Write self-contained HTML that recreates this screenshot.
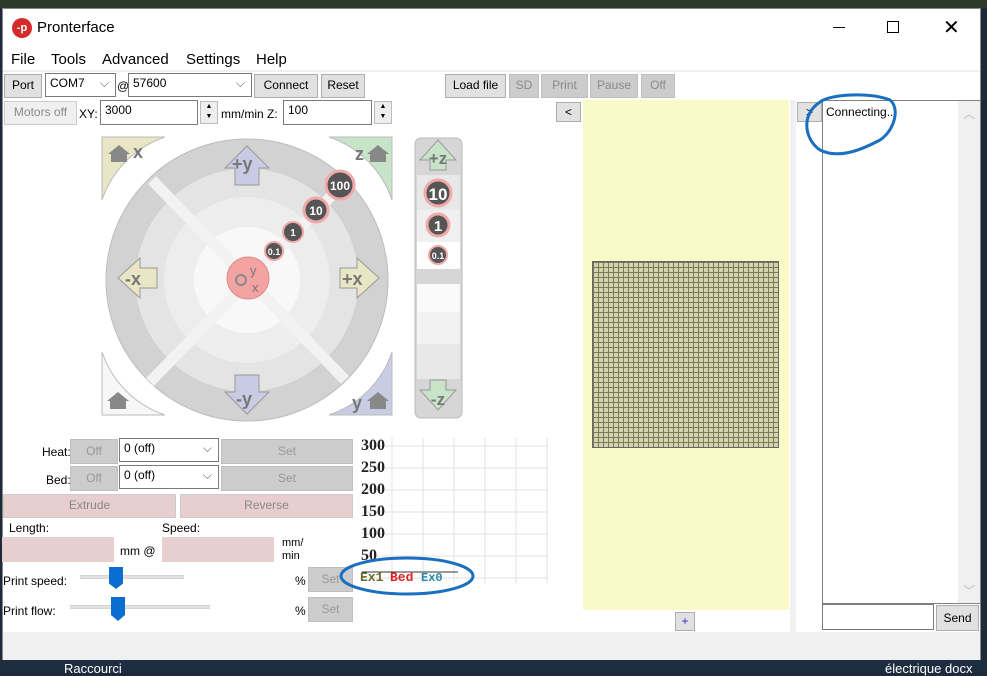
<!DOCTYPE html>
<html><head><meta charset="utf-8"><style>
*{box-sizing:border-box;margin:0;padding:0}
body{width:987px;height:672px;overflow:hidden;background:#1d2a3a;font-family:"Liberation Sans",sans-serif;font-size:12px;color:#000;position:relative}
.a{position:absolute}
.btn{position:absolute;background:#e1e1e1;border:1px solid #adadad;text-align:center;font-size:12px;line-height:21px;color:#000}
.dis{background:#ccc;border-color:#bfbfbf;color:#8a8a8a}
.inp{position:absolute;background:#fff;border:1px solid #7a7a7a;font-size:12px;padding:2px 4px}
.lbl{position:absolute;font-size:12px}
</style></head><body>
<div class="a" style="left:0;top:0;width:987px;height:8px;background:#2d3a2a"></div>
<div class="a" style="left:2px;top:8px;width:979px;height:652px;background:#fff;border:1px solid #888"></div>
<!-- title -->
<div class="a" style="left:12px;top:18px;width:20px;height:20px;border-radius:50%;background:#d42a2a;color:#fff;font-size:11px;font-weight:bold;line-height:20px;text-align:center">-p</div>
<div class="lbl" style="left:37px;top:19px;font-size:15px">Pronterface</div>
<div class="a" style="left:833px;top:27px;width:12px;height:1px;background:#000"></div>
<div class="a" style="left:887px;top:21px;width:12px;height:12px;border:1px solid #000"></div>
<div class="lbl" style="left:943px;top:15px;font-size:20px;font-weight:200">✕</div>
<!-- menu -->
<div class="lbl" style="left:11px;top:51px;font-size:15px">File</div>
<div class="lbl" style="left:51px;top:51px;font-size:15px">Tools</div>
<div class="lbl" style="left:102px;top:51px;font-size:15px">Advanced</div>
<div class="lbl" style="left:186px;top:51px;font-size:15px">Settings</div>
<div class="lbl" style="left:256px;top:51px;font-size:15px">Help</div>
<div class="a" style="left:3px;top:70px;width:977px;height:2px;background:#f0f0f0"></div>
<!-- row1 -->
<div class="btn" style="left:4px;top:74px;width:38px;height:24px">Port</div>
<div class="inp" style="left:45px;top:73px;width:71px;height:24px">COM7 <span style="position:absolute;right:6px;top:2px;color:#666">⌵</span></div>
<div class="lbl" style="left:117px;top:79px">@</div>
<div class="inp" style="left:128px;top:73px;width:124px;height:24px">57600<span style="position:absolute;right:6px;top:2px;color:#666">⌵</span></div>
<div class="btn" style="left:254px;top:74px;width:64px;height:24px">Connect</div>
<div class="btn" style="left:321px;top:74px;width:44px;height:24px">Reset</div>
<div class="btn" style="left:445px;top:74px;width:61px;height:24px">Load file</div>
<div class="btn dis" style="left:509px;top:74px;width:30px;height:24px">SD</div>
<div class="btn dis" style="left:541px;top:74px;width:47px;height:24px">Print</div>
<div class="btn dis" style="left:590px;top:74px;width:48px;height:24px">Pause</div>
<div class="btn dis" style="left:641px;top:74px;width:34px;height:24px">Off</div>
<!-- row2 -->
<div class="btn" style="left:4px;top:101px;width:73px;height:24px;background:#f0f0f0;color:#888;border-color:#ccc">Motors off</div>
<div class="lbl" style="left:79px;top:107px">XY:</div>
<div class="inp" style="left:100px;top:100px;width:98px;height:25px">3000</div>
<div class="a" style="left:200px;top:101px;width:18px;height:23px;border:1px solid #bbb;background:#eee;font-size:7px;text-align:center;line-height:10px">▲<br>▼</div>
<div class="lbl" style="left:221px;top:107px">mm/min Z:</div>
<div class="inp" style="left:283px;top:100px;width:89px;height:25px">100</div>
<div class="a" style="left:374px;top:101px;width:18px;height:23px;border:1px solid #bbb;background:#eee;font-size:7px;text-align:center;line-height:10px">▲<br>▼</div>
<div class="btn" style="left:556px;top:102px;width:25px;height:20px;line-height:18px">&lt;</div>
<!-- jog -->
<svg class="a" style="left:95px;top:130px" width="380" height="300" viewBox="95 130 380 300">
<circle cx="247" cy="280" r="141" fill="#d2d2d2" stroke="#bdbdbd"/>
<circle cx="247" cy="280" r="112" fill="#e4e4e4" stroke="#d0d0d0"/>
<circle cx="247" cy="280" r="83" fill="#ededed"/>
<circle cx="247" cy="280" r="53" fill="#f8f8f8"/>
<line x1="152" y1="180" x2="345" y2="380" stroke="#f2f2f2" stroke-width="11"/>
<line x1="150" y1="382" x2="345" y2="182" stroke="#f2f2f2" stroke-width="11"/>
<path d="M102 137h63a100 100 0 0 0 -63 63z" fill="#e8e6c4" stroke="#bbb"/>
<path d="M392 137h-63a100 100 0 0 1 63 63z" fill="#c8e4c8" stroke="#bbb"/>
<path d="M102 415h63a100 100 0 0 1 -63 -63z" fill="#f7f7f7" stroke="#bbb"/>
<path d="M392 415h-63a100 100 0 0 0 63 -63z" fill="#c9cde4" stroke="#bbb"/>
<path d="M235 185v-17h-10l22-22 22 22h-10v17z" fill="#c9cbe4" stroke="#999"/>
<path d="M235 375v17h-10l22 22 22-22h-10v-17z" fill="#c9cbe4" stroke="#999"/>
<path d="M157 268h-17v-10l-22 20 22 20v-10h17z" fill="#e8e6c4" stroke="#999"/>
<path d="M340 268h17v-10l22 20-22 20v-10h-17z" fill="#e8e6c4" stroke="#999"/>
<g font-family="Liberation Sans" font-weight="bold" fill="#777" font-size="18">
<text x="232" y="170">+y</text><text x="236" y="405">-y</text><text x="125" y="285">-x</text><text x="342" y="285">+x</text>
<text x="133" y="158">x</text><text x="355" y="160">z</text><text x="352" y="409">y</text></g>
<g fill="#888">
<path transform="translate(119,145)" d="M-11 9l11-9 11 9h-3v8h-16v-8z"/>
<path transform="translate(378,145)" d="M-11 9l11-9 11 9h-3v8h-16v-8z"/>
<path transform="translate(118,392)" d="M-11 9l11-9 11 9h-3v8h-16v-8z"/>
<path transform="translate(378,392)" d="M-11 9l11-9 11 9h-3v8h-16v-8z"/></g>
<circle cx="248" cy="278" r="21" fill="#f4a3a3" stroke="#d88"/>
<text x="250" y="275" font-size="13" fill="#777" font-family="Liberation Sans">y</text><text x="252" y="292" font-size="13" fill="#777" font-family="Liberation Sans">x</text>
<circle cx="241" cy="280" r="5" fill="none" stroke="#888" stroke-width="2"/>
<g font-family="Liberation Sans" font-weight="bold" fill="#fff" text-anchor="middle">
<circle cx="340" cy="185" r="14" fill="#555" stroke="#f0a8a8" stroke-width="3"/><text x="340" y="190" font-size="12">100</text>
<circle cx="316" cy="210" r="12" fill="#555" stroke="#f0a8a8" stroke-width="3"/><text x="316" y="215" font-size="12">10</text>
<circle cx="293" cy="232" r="10" fill="#555" stroke="#f0a8a8" stroke-width="2"/><text x="293" y="236" font-size="10">1</text>
<circle cx="274" cy="251" r="9" fill="#555" stroke="#f0a8a8" stroke-width="2"/><text x="274" y="255" font-size="9">0.1</text>
</g>
<rect x="415" y="138" width="47" height="280" rx="6" fill="#d6d6d6" stroke="#bbb"/>
<rect x="417" y="175" width="43" height="35" fill="#e8e8e8"/><rect x="417" y="210" width="43" height="32" fill="#f0f0f0"/><rect x="417" y="242" width="43" height="27" fill="#fff"/>
<rect x="417" y="284" width="43" height="28" fill="#fafafa"/><rect x="417" y="312" width="43" height="32" fill="#f2f2f2"/><rect x="417" y="344" width="43" height="35" fill="#e8e8e8"/>
<path d="M430 170v-10h-10l18-20 18 20h-10v10z" fill="#c8e4c8" stroke="#999"/>
<path d="M430 380v10h-10l18 20 18-20h-10v-10z" fill="#c8e4c8" stroke="#999"/>
<g font-family="Liberation Sans" font-weight="bold" fill="#777" font-size="17" text-anchor="middle"><text x="438" y="164">+z</text><text x="438" y="405">-z</text></g>
<g font-family="Liberation Sans" font-weight="bold" fill="#fff" text-anchor="middle">
<circle cx="438" cy="193" r="13" fill="#555" stroke="#f0a8a8" stroke-width="3"/><text x="438" y="200" font-size="17">10</text>
<circle cx="438" cy="225" r="11" fill="#555" stroke="#f0a8a8" stroke-width="3"/><text x="438" y="231" font-size="15">1</text>
<circle cx="438" cy="255" r="9" fill="#555" stroke="#f0a8a8" stroke-width="2"/><text x="438" y="259" font-size="9">0.1</text></g>
</svg>
<!-- bottom left -->
<div class="lbl" style="left:42px;top:445px">Heat:</div>
<div class="btn dis" style="left:70px;top:439px;width:48px;height:25px;line-height:23px;color:#999">Off</div>
<div class="inp" style="left:119px;top:438px;width:100px;height:24px">0 (off)<span style="position:absolute;right:6px;top:2px;color:#666">⌵</span></div>
<div class="btn dis" style="left:221px;top:439px;width:132px;height:25px;line-height:23px;color:#999">Set</div>
<div class="lbl" style="left:46px;top:473px">Bed:</div>
<div class="btn dis" style="left:70px;top:466px;width:48px;height:25px;line-height:23px;color:#999">Off</div>
<div class="inp" style="left:119px;top:465px;width:100px;height:24px">0 (off)<span style="position:absolute;right:6px;top:2px;color:#666">⌵</span></div>
<div class="btn dis" style="left:221px;top:466px;width:132px;height:25px;line-height:23px;color:#999">Set</div>
<div class="btn" style="left:3px;top:494px;width:173px;height:24px;background:#e8cfcf;border-color:#ccc;color:#888">Extrude</div>
<div class="btn" style="left:180px;top:494px;width:173px;height:24px;background:#e8cfcf;border-color:#ccc;color:#888">Reverse</div>
<div class="lbl" style="left:9px;top:521px">Length:</div>
<div class="lbl" style="left:162px;top:521px">Speed:</div>
<div class="a" style="left:2px;top:537px;width:112px;height:25px;background:#e8cfcf"></div>
<div class="lbl" style="left:120px;top:544px">mm @</div>
<div class="a" style="left:162px;top:537px;width:112px;height:25px;background:#e8cfcf"></div>
<div class="lbl" style="left:282px;top:537px;font-size:11px;line-height:13px">mm/<br>min</div>
<div class="lbl" style="left:3px;top:574px">Print speed:</div>
<div class="a" style="left:80px;top:575px;width:104px;height:4px;background:#e2e2e2;border:1px solid #d6d6d6"></div>
<div class="a" style="left:109px;top:567px;width:14px;height:22px;background:#0a6ed1;clip-path:polygon(0 0,100% 0,100% 75%,50% 100%,0 75%)"></div>
<div class="lbl" style="left:295px;top:574px">%</div>
<div class="btn dis" style="left:308px;top:567px;width:45px;height:25px;line-height:23px;color:#999">Set</div>
<div class="lbl" style="left:3px;top:604px">Print flow:</div>
<div class="a" style="left:70px;top:605px;width:140px;height:4px;background:#e2e2e2;border:1px solid #d6d6d6"></div>
<div class="a" style="left:111px;top:597px;width:14px;height:24px;background:#0a6ed1;clip-path:polygon(0 0,100% 0,100% 75%,50% 100%,0 75%)"></div>
<div class="lbl" style="left:295px;top:604px">%</div>
<div class="btn dis" style="left:308px;top:597px;width:45px;height:25px;line-height:23px;color:#999">Set</div>
<!-- graph -->
<svg class="a" style="left:358px;top:438px" width="195" height="160">
<g stroke="#e2e2e2"><line x1="34" y1="0" x2="34" y2="145"/><line x1="65" y1="0" x2="65" y2="145"/><line x1="96" y1="0" x2="96" y2="145"/><line x1="127" y1="0" x2="127" y2="145"/><line x1="158" y1="0" x2="158" y2="145"/><line x1="189" y1="0" x2="189" y2="145"/>
<line x1="4" y1="8" x2="190" y2="8"/><line x1="4" y1="30" x2="190" y2="30"/><line x1="4" y1="52" x2="190" y2="52"/><line x1="4" y1="74" x2="190" y2="74"/><line x1="4" y1="96" x2="190" y2="96"/><line x1="4" y1="118" x2="190" y2="118"/><line x1="4" y1="140" x2="190" y2="140"/></g>
<g font-family="Liberation Serif" font-weight="bold" font-size="16" fill="#222"><text x="3" y="12">300</text><text x="3" y="34">250</text><text x="3" y="56">200</text><text x="3" y="78">150</text><text x="3" y="100">100</text><text x="3" y="122">50</text></g>
<line x1="4" y1="134" x2="100" y2="134" stroke="#333"/>
<text x="2" y="143" font-family="Liberation Mono" font-size="13" font-weight="bold" fill="#6a6a2a">Ex1</text>
<text x="32" y="143" font-family="Liberation Mono" font-size="13" font-weight="bold" fill="#d22">Bed</text>
<text x="63" y="143" font-family="Liberation Mono" font-size="12" font-weight="bold" fill="#28a">Ex0</text>
</svg>
<!-- yellow panel -->
<div class="a" style="left:583px;top:100px;width:206px;height:510px;background:#fafac8"></div>
<div class="a" style="left:592px;top:261px;width:187px;height:187px;background-color:#d4d4ac;background-image:linear-gradient(#7a7a5a 1px,transparent 1px),linear-gradient(90deg,#7a7a5a 1px,transparent 1px);background-size:5px 5px;border:1px solid #666"></div>
<div class="btn" style="left:675px;top:612px;width:20px;height:19px;line-height:17px;color:#33c">+</div>
<div class="a" style="left:790px;top:100px;width:6px;height:532px;background:#f0f0f0"></div>
<!-- log -->
<div class="btn" style="left:797px;top:102px;width:25px;height:20px;line-height:18px">&gt;</div>
<div class="a" style="left:822px;top:100px;width:159px;height:504px;border:1px solid #828282;background:#fff"></div>
<div class="a" style="left:958px;top:101px;width:22px;height:502px;background:#f0f0f0;color:#bbb;text-align:center;font-size:12px"><div style="margin-top:4px">︿</div><div style="position:absolute;bottom:4px;width:22px">﹀</div></div>
<div class="lbl" style="left:826px;top:105px">Connecting...</div>
<div class="inp" style="left:822px;top:604px;width:112px;height:26px"></div>
<div class="btn" style="left:936px;top:605px;width:43px;height:26px;line-height:24px">Send</div>
<!-- status -->
<div class="a" style="left:3px;top:632px;width:977px;height:28px;background:#f0f0f0"></div>
<div class="a" style="left:0;top:660px;width:987px;height:12px;background:#1f2d40"></div>
<div class="lbl" style="left:64px;top:661px;color:#fff;font-size:13px">Raccourci</div>
<div class="lbl" style="left:885px;top:661px;color:#fff;font-size:13px">électrique docx</div>
<!-- annotations -->
<svg class="a" style="left:0;top:0" width="987" height="672" fill="none" stroke="#1a6fc0" stroke-width="3">
<path d="M820 102c10-8 50-10 70-2 10 8 5 30-10 40-15 8-40 20-60 10-15-10-20-35 0-48z"/>
<ellipse cx="407" cy="576" rx="66" ry="18"/>
</svg>
</body></html>
